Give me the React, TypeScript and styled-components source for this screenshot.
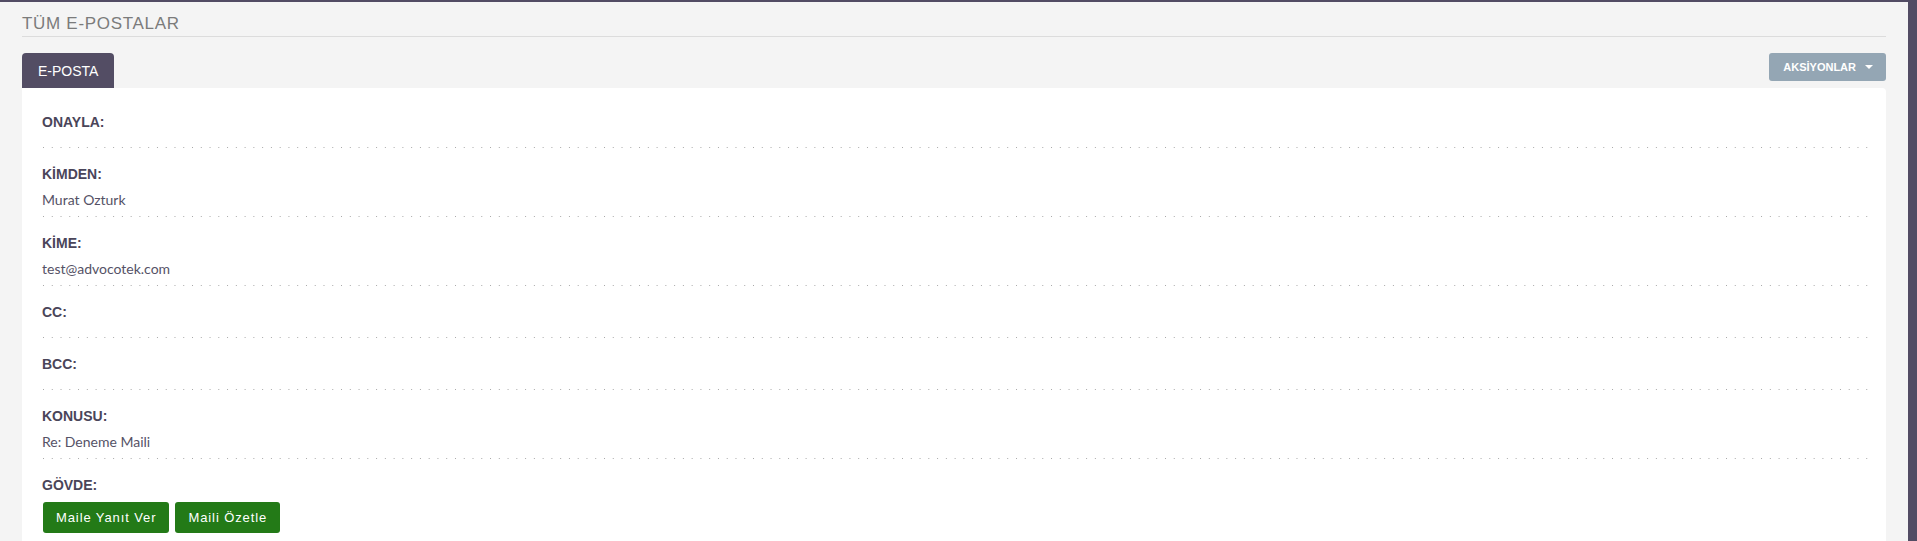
import React from 'react';
import styled, { createGlobalStyle } from 'styled-components';

const GlobalStyle = createGlobalStyle`
  html, body {
    margin: 0;
    padding: 0;
    overflow: hidden;
    background: #524c64;
  }

  * {
    box-sizing: border-box;
  }
`;

const Page = styled.div`
  margin: 2px 9px 0 0;
  min-height: calc(100vh - 2px);
  padding: 10px 22px 0;
  background: #f4f4f4;
  font-family: 'Liberation Sans', Arial, sans-serif;
`;

const Heading = styled.h1`
  margin: 0;
  font-size: 17px;
  line-height: 24px;
  font-weight: 400;
  letter-spacing: 0.7px;
  color: #7b7b7b;
  border-bottom: 1px solid #dcdcdc;
`;

const TabBar = styled.div`
  margin-top: 16px;
  display: flex;
  justify-content: space-between;
  align-items: flex-start;
`;

const Tab = styled.div`
  height: 35px;
  padding: 0 16px;
  display: flex;
  align-items: center;
  background: #534d64;
  color: #ffffff;
  font-size: 14px;
  border-radius: 4px 4px 0 0;
`;

const ActionsButton = styled.button`
  height: 28px;
  padding: 0 13px 0 14px;
  display: flex;
  align-items: center;
  gap: 9px;
  border: none;
  border-radius: 3px;
  background: #94a6b4;
  color: #ffffff;
  font-family: 'Liberation Sans', Arial, sans-serif;
  font-size: 11px;
  font-weight: 700;
  cursor: pointer;
`;

const Caret = styled.span`
  width: 0;
  height: 0;
  border-left: 4px solid transparent;
  border-right: 4px solid transparent;
  border-top: 4px solid #ffffff;
`;

const Card = styled.div`
  background: #ffffff;
  border-radius: 0 4px 0 0;
  padding: 8px 12px 20px 20px;
`;

const Field = styled.div<{ $last?: boolean }>`
  padding: 16px 0 ${(p) => (p.$last ? '0' : '9px')};
  background: ${(p) =>
    p.$last
      ? 'none'
      : 'linear-gradient(to right, #a8a8a8 1px, transparent 1px) 1px 100% / 8.77px 1px repeat-x'};
`;

const Label = styled.div`
  font-size: 14px;
  line-height: 20px;
  font-weight: 700;
  color: #4a4559;
  margin-bottom: 7px;
`;

const Value = styled.div`
  font-family: Lato, 'Liberation Sans', sans-serif;
  font-size: 14px;
  line-height: 17px;
  color: #555266;
`;

const ButtonRow = styled.div`
  display: flex;
  gap: 6px;
  padding-left: 1px;
`;

const GreenButton = styled.button`
  height: 31px;
  padding: 0 13px;
  border: none;
  border-radius: 3px;
  background: #237a17;
  color: #ffffff;
  font-family: 'Liberation Sans', Arial, sans-serif;
  font-size: 13px;
  letter-spacing: 0.9px;
  cursor: pointer;
`;

const fields: { label: string; value?: string }[] = [
  { label: 'ONAYLA:' },
  { label: 'KİMDEN:', value: 'Murat Ozturk' },
  { label: 'KİME:', value: 'test@advocotek.com' },
  { label: 'CC:' },
  { label: 'BCC:' },
  { label: 'KONUSU:', value: 'Re: Deneme Maili' },
];

export default function App() {
  return (
    <>
      <GlobalStyle />
      <Page>
        <Heading>TÜM E-POSTALAR</Heading>
        <TabBar>
          <Tab>E-POSTA</Tab>
          <ActionsButton>
            AKSİYONLAR
            <Caret />
          </ActionsButton>
        </TabBar>
        <Card>
          {fields.map((f) => (
            <Field key={f.label}>
              <Label>{f.label}</Label>
              {f.value && <Value>{f.value}</Value>}
            </Field>
          ))}
          <Field $last>
            <Label>GÖVDE:</Label>
            <ButtonRow>
              <GreenButton>Maile Yanıt Ver</GreenButton>
              <GreenButton>Maili Özetle</GreenButton>
            </ButtonRow>
          </Field>
        </Card>
      </Page>
    </>
  );
}
